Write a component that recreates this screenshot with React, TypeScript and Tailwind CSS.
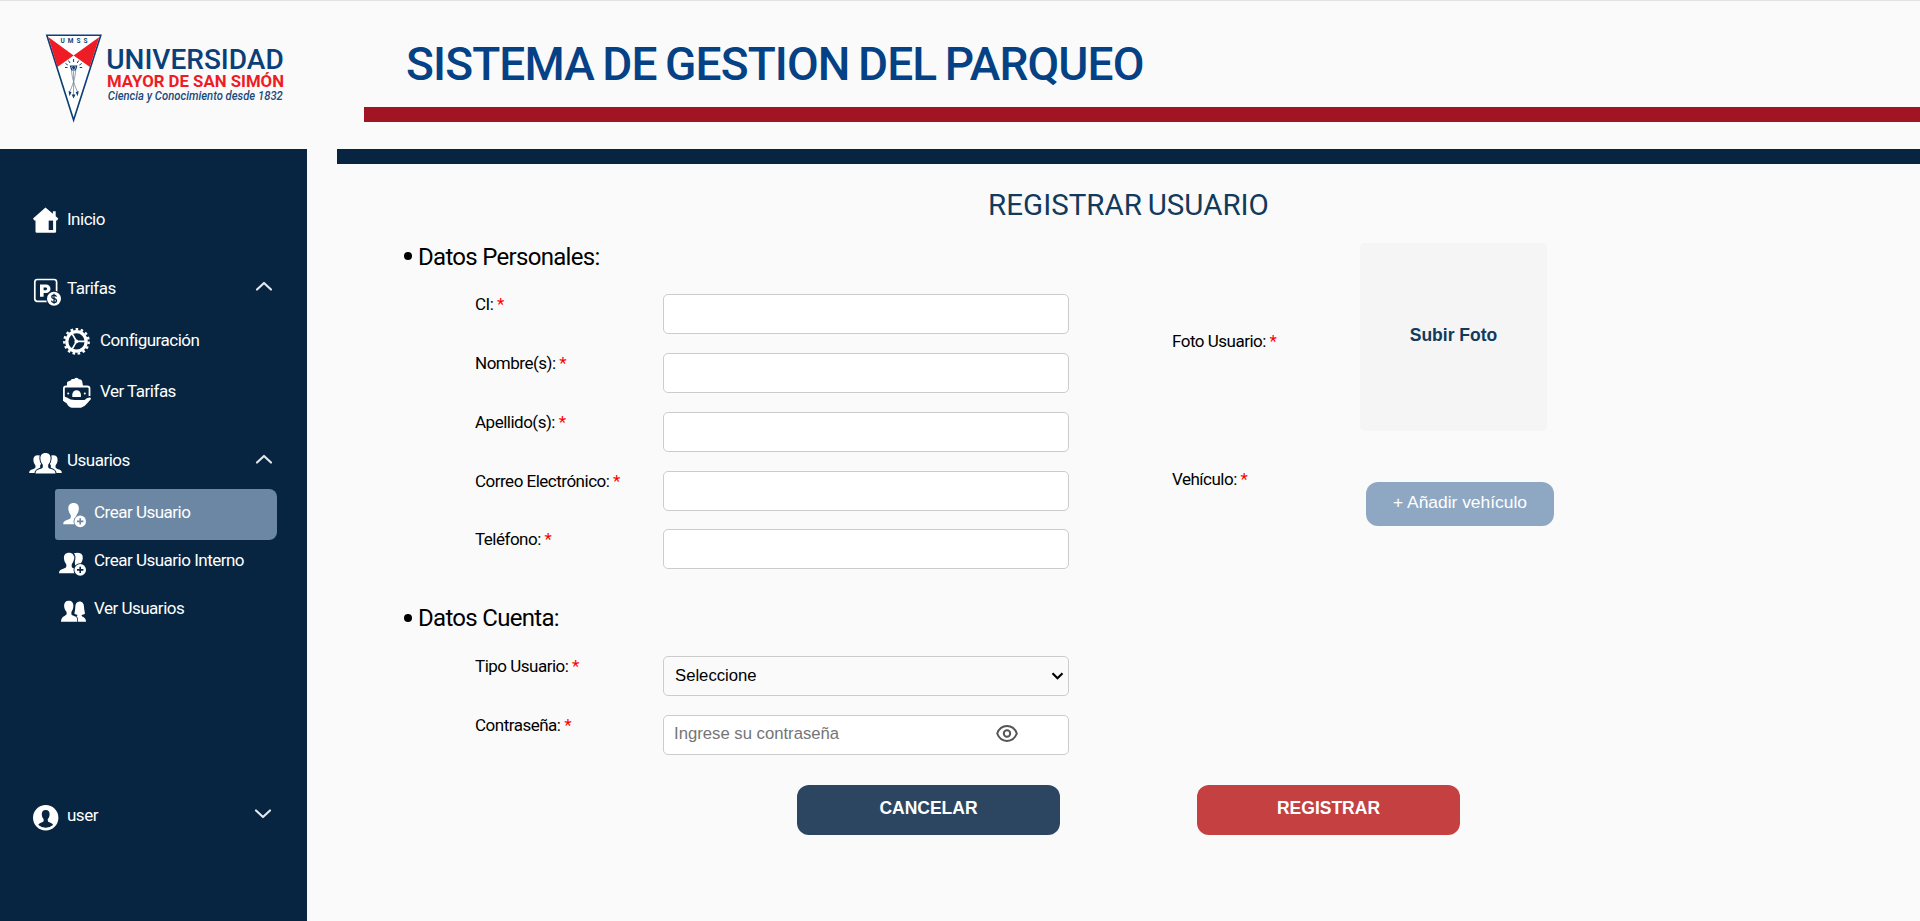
import React from "react";

const NAVY = "#072541";

function IconBox({ x, y, w = 40, h = 40, children }: { x: number; y: number; w?: number; h?: number; children: React.ReactNode }) {
  return (
    <svg width={w} height={h} viewBox={`${x} ${y} ${w} ${h}`} className="shrink-0" fill="white" stroke="none">
      {children}
    </svg>
  );
}

function HomeIcon() {
  return (
    <IconBox x={27} y={200}>
      <path d="M45.5 207.6 33 218.6l1.3 1.8h1.2v11q0 1.3 1.3 1.3h18q1.3 0 1.3-1.3v-11h1l1.2-1.8-2.6-2.4v-5h-2.8v2.6z" />
      <rect x="48.7" y="220.6" width="4.4" height="9.4" fill={NAVY} />
    </IconBox>
  );
}

function ParkingFeeIcon() {
  return (
    <IconBox x={27} y={268.5}>
      <rect x="34.8" y="279" width="21.8" height="21.8" rx="2.6" fill="none" stroke="white" strokeWidth="1.7" />
      <path fillRule="evenodd" d="M40 284h6.2a4.2 4.2 0 0 1 0 8.6h-2.6v3.6H40zm3.6 2.9v2.9h2.1a1.45 1.45 0 0 0 0-2.9z" />
      <circle cx="54" cy="298.2" r="7.9" fill={NAVY} />
      <circle cx="54" cy="298.2" r="7" />
      <path d="M56.4 296.2q-.5-1.5-2.4-1.5-2.2 0-2.2 1.7 0 1.4 2.2 1.8 2.5.4 2.5 2 0 1.8-2.4 1.8-2.3 0-2.7-1.8M54 293.2v10" fill="none" stroke={NAVY} strokeWidth="1.3" />
    </IconBox>
  );
}

function GearIcon() {
  return (
    <IconBox x={59} y={321}>
      <circle cx="76.5" cy="341.4" r="12.2" fill="none" stroke="white" strokeWidth="2.4" strokeDasharray="2.6 2.51" />
      <circle cx="76.5" cy="341.4" r="9.7" fill="none" stroke="white" strokeWidth="3.2" />
      <path d="M76.5 341.4h9M76.5 341.4l-4.5-8M76.5 341.4l-4.5 8" stroke="white" strokeWidth="1.7" />
      <circle cx="76.3" cy="341.4" r="1.9" />
    </IconBox>
  );
}

function CashHandIcon() {
  return (
    <IconBox x={59} y={372}>
      <path d="M67 386.500v-3.600q0-1 1-1.400l2.600-.9q.4-1.500 1.800-1.500h1.800q.8-1.300 2.400-1.300t2.200 1.500q2.800-.2 3.300 1.700l1 5.500z" />
      <path d="M63.900 401v-12.500q0-2 2-2h21.400q2.200 0 2.200 2v7.500" fill="none" stroke="white" strokeWidth="1.800" />
      <path d="M72.300 397v-2.400a4.300 4.300 0 0 1 8.600 0v2.400z" />
      <circle cx="68.200" cy="393.600" r="1" />
      <circle cx="84.800" cy="393.600" r="1" />
      <path d="M63 396v4.500q1.400 1.800 3.400 2.400 2 4 5.400 4.800h9.200q3.600-1 5.800-4l4-4.500q.8-1.800-1.400-1.600-2.800.3-4.800 2.400h-8.600q-5.600.4-8.500-2.200z" />
    </IconBox>
  );
}

/* Head-and-shoulders silhouette, placed by the top centre of the head. */
function Bust({ x, y, s = 1, fill = "white", outline }: { x: number; y: number; s?: number; fill?: string; outline?: string }) {
  return (
    <path
      transform={`translate(${x} ${y}) scale(${s})`}
      fill={fill}
      stroke={outline ?? "none"}
      strokeWidth={outline ? 2.2 : 0}
      paintOrder="stroke"
      d="M0 0C3.600 0 5.400 2.200 5.300 5.600 5.200 9 3.600 11 2.800 12.200v2.300c0 1.200 1.200 1.500 3.200 2.200 2.900 1 4.400 1.800 4.400 4.600H-10.400c0-2.800 1.500-3.600 4.400-4.600 2-.7 3.200-1 3.200-2.200v-2.300C-3.600 11-5.200 9-5.300 5.600-5.400 2.200-3.600 0 0 0z"
    />
  );
}

function PlusBadge({ x, y, bg }: { x: number; y: number; bg: string }) {
  return (
    <>
      <circle cx={x} cy={y} r="6.700" fill={bg} />
      <circle cx={x} cy={y} r="5.800" fill="white" />
      <path d={`M${x - 3.2} ${y}h6.400M${x} ${y - 3.2}v6.400`} stroke={bg} strokeWidth="1.6" />
    </>
  );
}

function GroupIcon() {
  return (
    <IconBox x={27} y={441}>
      <Bust x={37.8} y={455.3} s={0.83} />
      <Bust x={53.2} y={455.3} s={0.83} />
      <Bust x={45.5} y={453} s={0.96} outline={NAVY} />
    </IconBox>
  );
}

function AddUserIcon() {
  return (
    <IconBox x={55} y={489} w={38} h={47}>
      <Bust x={73.6} y={503} s={1} />
      <PlusBadge x={80.2} y={521.4} bg="#6c87a4" />
    </IconBox>
  );
}

function AddUsersIcon() {
  return (
    <IconBox x={55} y={540.5} w={38}>
      <path d="M74 552.800q4-1.300 7.200.4 1.800 1.400 1.600 4.600-.3 3.400-2.400 6v4h-5z" />
      <Bust x={69} y={552.2} s={0.96} />
      <path d="M73.900 553.400q1.500 2 1 5-.2 2.600-1.800 4.800v2.600" fill="none" stroke={NAVY} strokeWidth="1" />
      <PlusBadge x={80.2} y={569.4} bg={NAVY} />
    </IconBox>
  );
}

function UsersIcon() {
  return (
    <IconBox x={55} y={588.5} w={38}>
      <path d="M79.500 601c3 0 4.300 2.200 4.500 5.200.1 2.600.8 5 1 6.800-1 1-2.300 1.300-3.300 1.400v1.200c.6.900 4.300 1.300 4.300 5.600H75.500l-1.200-4.400 3-1.600v-.9c-1-.1-2-.5-3-1.300.8-2.600.9-4.400 1-6.800.2-3 1.400-5.200 4.200-5.200z" />
      <path d="M68.700 600.200c3.300 0 4.700 2 4.700 5.200-.1 3-1.300 5-2 6v2.300c0 1.100 4.300 1.800 5.200 3.300.5.900.7 2.400.7 4.200H61c0-5.600 5-5.800 5.600-7.500v-2.300c-.9-1-2.400-3-2.500-6 0-3.200 1.400-5.200 4.600-5.200z" stroke={NAVY} strokeWidth="1.600" paintOrder="stroke" />
    </IconBox>
  );
}

function AccountIcon() {
  return (
    <IconBox x={27} y={796}>
      <circle cx="45.700" cy="817.800" r="12.700" />
      <path d="M45.700 810c2.900 0 4 2 3.900 4.400-.1 2.200-.9 3.600-1.800 4.600v2c0 1 1.300 1.200 2.600 1.700 1.600.6 2.400 1.100 2.600 2.400q-3 2.600-7.300 2.600t-7.300-2.600c.2-1.300 1-1.800 2.600-2.400 1.300-.5 2.600-.7 2.600-1.700v-2c-.9-1-1.700-2.400-1.800-4.600-.1-2.400 1-4.400 3.900-4.400z" fill={NAVY} />
    </IconBox>
  );
}

function Chevron({ down = false }: { down?: boolean }) {
  return (
    <svg width="18" height="12" viewBox="0 0 18 12" className={down ? "mb-1 ml-auto mr-[35px]" : "mb-[5px] ml-auto mr-[34px]"} fill="none" stroke="#e4e8ec" strokeWidth="2.200" strokeLinecap="round" strokeLinejoin="round">
      <path d={down ? "M2 2.500l7 6.500 7-6.500" : "M2 9.500 9 3l7 6.500"} />
    </svg>
  );
}

function Logo() {
  return (
    <svg width="364" height="148" viewBox="0 1 364 148" className="shrink-0">
      <path d="M46.800 35.300h54L73.600 120z" fill="white" stroke="#0b3f78" strokeWidth="1.600" />
      <path d="M48.300 37 73.600 55.500 57.400 67zM99.300 37 73.600 55.500 89.900 67z" fill="#ee1c25" />
      <text x="60.500" y="43.200" textLength="27" fontFamily="Roboto" fontWeight="700" fontSize="6.500" fill="#0b3f78">UMSS</text>
      <g stroke="#0b3f78" fill="none" strokeWidth="1">
        <path d="M73.600 59v3M68.500 60.500l1.500 2.500M78.700 60.500l-1.500 2.500M65.500 63.500l2.300 1.500M81.700 63.500l-2.300 1.500M65 67.500h2.500M79.700 67.500h2.500" />
        <path d="M70.500 66l6.200 0-1.200 4h-3.800z" strokeWidth="1.200" />
        <path d="M71.500 70c.5 6 1 10 6 22M75.700 70c-.5 6-1 10-6 22M73.600 68v27" stroke="#7b8794" strokeWidth=".8" />
      </g>
      <g fill="#0b3f78">
        <circle cx="73.600" cy="67.500" r="1.600" />
        <path d="M68.500 91l3 1.200-2 4zM78.700 91l-3 1.200 2 4zM71.700 94.500h3.800l-1.900 4z" />
      </g>
      <text x="106.200" y="68.500" textLength="177.500" lengthAdjust="spacingAndGlyphs" fontFamily="Roboto" fontWeight="500" fontSize="28.500" fill="#0b3f78">UNIVERSIDAD</text>
      <text x="107" y="87" textLength="177" lengthAdjust="spacingAndGlyphs" fontFamily="Roboto" fontWeight="700" fontSize="17" fill="#ee1c25">MAYOR DE SAN SIMÓN</text>
      <text x="107.800" y="100.300" textLength="175" lengthAdjust="spacingAndGlyphs" fontFamily="Roboto" fontStyle="italic" fontWeight="500" fontSize="12" fill="#1b4a7e">Ciencia y Conocimiento desde 1832</text>
    </svg>
  );
}

function Label({ children, className = "" }: { children: React.ReactNode; className?: string }) {
  return (
    <label className={`block whitespace-nowrap text-[17px] leading-5 tracking-[-0.5px] text-black ${className}`}>
      {children} <span className="text-[#ff0000]">*</span>
    </label>
  );
}

const box = "h-10 w-[406px] rounded-[5px] border border-[#cccccc] font-['Liberation_Sans',Arial,sans-serif]";

function Field({ label, children }: { label: string; children?: React.ReactNode }) {
  return (
    <div className="flex h-10">
      <Label className="w-[188px]">{label}</Label>
      {children ?? <input className={`${box} bg-white px-2.5`} />}
    </div>
  );
}

function SectionTitle({ children }: { children: React.ReactNode }) {
  return (
    <h3 className="flex h-[30px] text-[24px] leading-[30px] tracking-[-0.7px] text-black">
      <span className="flex w-4 items-center pl-[1.5px]">
        <span className="mb-[1px] size-2 rounded-full bg-black" />
      </span>
      {children}
    </h3>
  );
}

const row = "flex h-10 items-center whitespace-nowrap";

function Sidebar() {
  return (
    <nav className="flex w-[307px] shrink-0 flex-col bg-[#072541] pt-[51px] text-[17px] tracking-[-0.5px] text-white">
      <a className={`${row} pl-[27px]`}><HomeIcon />Inicio</a>
      <a className={`${row} mt-[28.5px] pl-[27px]`}><ParkingFeeIcon />Tarifas<Chevron /></a>
      <a className={`${row} mt-[12.5px] gap-px pl-[59px]`}><GearIcon />Configuración</a>
      <a className={`${row} mt-[11px] gap-px pl-[59px]`}><CashHandIcon />Ver Tarifas</a>
      <a className={`${row} mt-[29px] pl-[27px]`}><GroupIcon />Usuarios<Chevron /></a>
      <a className="ml-[55px] mt-2 flex h-[51px] w-[222px] items-center gap-px whitespace-nowrap rounded-l-[3px] rounded-r-[8px] bg-[#6c87a4] pb-1"><AddUserIcon />Crear Usuario</a>
      <a className={`${row} mt-[0.5px] gap-px pl-[55px]`}><AddUsersIcon />Crear Usuario Interno</a>
      <a className={`${row} mt-2 gap-px pl-[55px]`}><UsersIcon />Ver Usuarios</a>
      <a className={`${row} mt-[167.5px] pl-[27px]`}><AccountIcon />user<Chevron down /></a>
    </nav>
  );
}

function RegisterForm() {
  return (
    <form className="mt-[19px] pl-[65px]">
      <div className="flex">
        <div className="w-[771px]">
          <SectionTitle>Datos Personales:</SectionTitle>
          <div className="mt-[22.7px] flex flex-col gap-[18.8px] pl-[73px]">
            <Field label="CI:" />
            <Field label="Nombre(s):" />
            <Field label="Apellido(s):" />
            <Field label="Correo Electrónico:" />
            <Field label="Teléfono:" />
          </div>
          <div className="mt-[34.1px]">
            <SectionTitle>Datos Cuenta:</SectionTitle>
          </div>
          <div className="mt-[22.5px] flex flex-col gap-[19px] pl-[73px]">
            <Field label="Tipo Usuario:">
              <div className={`${box} flex items-center justify-between bg-[#fafafa] pl-[11px] pr-1 text-[16.7px] text-black`}>
                Seleccione
                <svg width="13" height="10" viewBox="0 0 13 10" fill="none" stroke="black" strokeWidth="2.200">
                  <path d="M1.500 2.200l5 5 5-5" />
                </svg>
              </div>
            </Field>
            <Field label="Contraseña:">
              <div className={`${box} flex items-center justify-between bg-white pb-0.5 pl-2.5 pr-[49px] text-[16.7px] text-[#757575]`}>
                Ingrese su contraseña
                <svg width="24" height="20" viewBox="0 0 24 20" fill="none" stroke="#555555" strokeWidth="2">
                  <path d="M2.200 9.500C4 4.700 7.600 2.100 12 2.100S20 4.700 21.800 9.500C20 14.300 16.400 16.900 12 16.900S4 14.300 2.200 9.500z" />
                  <circle cx="12" cy="9.500" r="3.200" />
                </svg>
              </div>
            </Field>
          </div>
        </div>
        <div className="pt-[1.5px] font-['Liberation_Sans',Arial,sans-serif]">
          <div className="flex items-start">
            <Label className="-ml-px mt-[88px] w-[188px] font-['Roboto',sans-serif]">Foto Usuario:</Label>
            <div className="flex h-[188px] w-[187px] items-center justify-center rounded-[5px] bg-[#f5f5f5] pb-[3px] text-[17.5px] font-bold text-[#123a5c]">Subir Foto</div>
          </div>
          <div className="mt-[38px] flex items-start">
            <Label className="-ml-px w-[194px] font-['Roboto',sans-serif]">Vehículo:</Label>
            <button type="button" className="mt-[13px] h-11 w-[188px] whitespace-nowrap rounded-[12px] bg-[#8ea8c4] pb-[3px] text-[17.4px] text-white">+ Añadir vehículo</button>
          </div>
        </div>
      </div>
      <div className="mt-[30px] flex gap-[137px] pl-[395px] font-['Liberation_Sans',Arial,sans-serif] text-[17.5px] font-bold text-white">
        <button type="button" className="h-[50px] w-[263px] rounded-[12px] bg-[#2c4661] pb-[3px]">CANCELAR</button>
        <button type="button" className="h-[50px] w-[263px] rounded-[12px] bg-[#c44041] pb-[3px]">REGISTRAR</button>
      </div>
    </form>
  );
}

export default function App() {
  return (
    <div className="flex h-[921px] flex-col overflow-hidden border-t border-[#e2e2e2] bg-[#fafafa] font-['Roboto',sans-serif]">
      <header className="flex h-[148px] shrink-0">
        <Logo />
        <div className="flex grow flex-col pt-[34px]">
          <h1 className="h-[58px] whitespace-nowrap pl-[42px] text-[46px] font-medium leading-[58px] tracking-[-0.85px] text-[#044185] [word-spacing:-2.200px]">SISTEMA DE GESTION DEL PARQUEO</h1>
          <div className="mt-[14px] h-[15px] bg-[#a01423]" />
        </div>
      </header>
      <div className="flex grow">
        <Sidebar />
        <main className="ml-[30px] grow">
          <div className="h-[15px] bg-[#072541]" />
          <h2 className="mt-[22.5px] h-9 text-center text-[29.5px] leading-9 text-[#123a5c] [word-spacing:-1.5px]">REGISTRAR USUARIO</h2>
          <RegisterForm />
        </main>
      </div>
    </div>
  );
}
